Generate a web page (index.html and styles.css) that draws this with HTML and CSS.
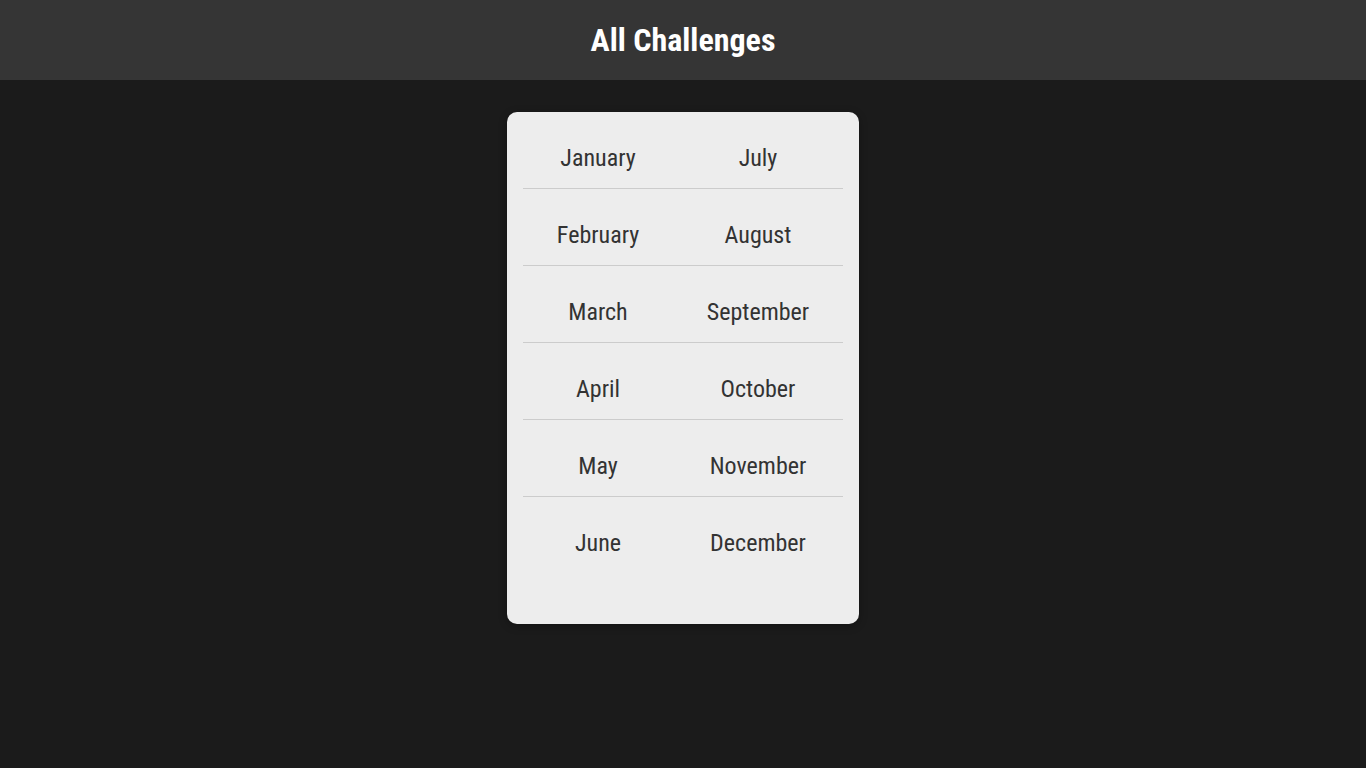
FILE: index.html
```html
<!DOCTYPE html>
<html lang="en">
<head>
<meta charset="utf-8">
<title>All Challenges</title>
<link rel="stylesheet" href="styles.css">
</head>
<body>
<header class="topbar"><h1 class="title">All Challenges</h1></header>
<main class="main">
  <section class="card">
    <div class="row"><span class="cell">January</span><span class="cell">July</span></div>
    <div class="row"><span class="cell">February</span><span class="cell">August</span></div>
    <div class="row"><span class="cell">March</span><span class="cell">September</span></div>
    <div class="row"><span class="cell">April</span><span class="cell">October</span></div>
    <div class="row"><span class="cell">May</span><span class="cell">November</span></div>
    <div class="row last"><span class="cell">June</span><span class="cell">December</span></div>
  </section>
</main>
</body>
</html>
```
FILE: styles.css
```css
* { box-sizing: border-box; }
html, body { margin: 0; padding: 0; }
body {
  background: #1b1b1b;
  font-family: "Roboto Condensed", Roboto, "Liberation Sans Narrow", sans-serif;
  font-stretch: condensed;
  min-height: 768px;
}
.topbar {
  height: 80px;
  background: #353535;
  display: flex;
  align-items: center;
  justify-content: center;
}
.title {
  margin: 0;
  color: #ffffff;
  font-size: 32px;
  font-weight: 700;
}
.main {
  display: flex;
  justify-content: center;
  padding-top: 32px;
}
.card {
  width: 352px;
  height: 512px;
  background: #ededed;
  border-radius: 10px;
  padding: 0 16px;
  box-shadow: 0 2px 8px rgba(0,0,0,0.3);
}
.row {
  display: grid;
  grid-template-columns: 160px 160px;
  margin-top: 16px;
  height: 61px;
  align-items: center;
  border-bottom: 1px solid #cccccc;
}
.row.last { border-bottom-color: transparent; }
.cell {
  text-align: center;
  padding-right: 10px;
  font-size: 24px;
  color: #333333;
}
```
